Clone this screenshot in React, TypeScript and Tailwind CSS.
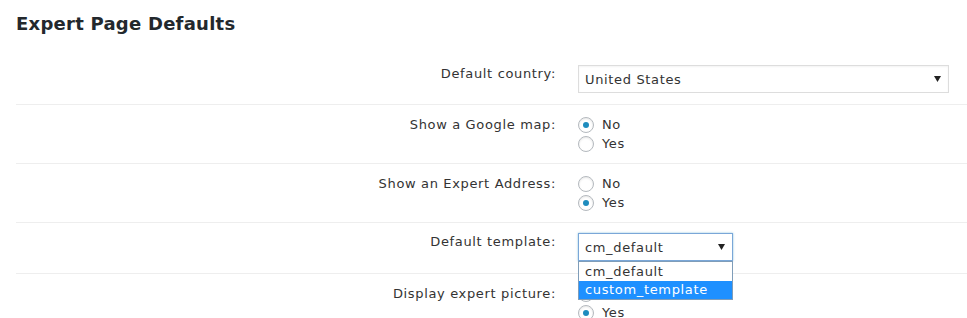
import React from "react";

const Radio = ({ checked }: { checked?: boolean }) => (
  <span className="w-[16px] h-[16px] rounded-full border border-[#b4b9be] bg-white shadow-[inset_0_1px_2px_rgba(0,0,0,0.1)] flex items-center justify-center shrink-0">
    {checked && <span className="w-[6px] h-[6px] rounded-full bg-[#1e8cbe]" />}
  </span>
);

const RadioLine = ({ checked, label }: { checked?: boolean; label: string }) => (
  <div className="flex items-center h-[19px] gap-[8px]">
    <Radio checked={checked} />
    <span>{label}</span>
  </div>
);

const Arrow = () => (
  <svg width="7" height="6" viewBox="0 0 7 6" className="shrink-0">
    <path d="M0 0 H7 L3.5 6 Z" fill="#222" />
  </svg>
);

export default function App() {
  return (
    <div className="font-['DejaVu_Sans',sans-serif] text-[13px] leading-[19px] tracking-[0.65px] text-[#333] bg-white w-[967px] h-[318px] overflow-hidden">
      <h2 className="ml-[16px] mt-[12px] text-[18px] leading-[24px] tracking-[0.25px] font-bold text-[#23282d]">
        Expert Page Defaults
      </h2>
      <div className="ml-[16px] mt-[16px]">
        {/* Row 1 */}
        <div className="flex border-b border-[#eee]">
          <div className="w-[540px] shrink-0 text-right pt-[12px]">Default country:</div>
          <div className="pl-[22px] pt-[13px] pb-[11px]">
            <div className="w-[371px] h-[28px] border border-[#ddd] bg-white flex items-center justify-between pl-[6px] pr-[7px] shadow-[inset_0_1px_2px_rgba(0,0,0,0.05)]">
              <span>United States</span>
              <Arrow />
            </div>
          </div>
        </div>
        {/* Row 2 */}
        <div className="flex border-b border-[#eee]">
          <div className="w-[540px] shrink-0 text-right pt-[10px]">Show a Google map:</div>
          <div className="pl-[22px] pt-[10px] pb-[10px]">
            <RadioLine checked label="No" />
            <RadioLine label="Yes" />
          </div>
        </div>
        {/* Row 3 */}
        <div className="flex border-b border-[#eee]">
          <div className="w-[540px] shrink-0 text-right pt-[10px]">Show an Expert Address:</div>
          <div className="pl-[22px] pt-[10px] pb-[10px]">
            <RadioLine label="No" />
            <RadioLine checked label="Yes" />
          </div>
        </div>
        {/* Row 4 */}
        <div className="flex border-b border-[#eee]">
          <div className="w-[540px] shrink-0 text-right pt-[9px]">Default template:</div>
          <div className="pl-[22px] pt-[10px] pb-[12px]">
            <div className="relative">
              <div className="w-[155px] h-[28px] border border-[#7aa7d8] bg-white flex items-center justify-between pl-[6px] pr-[7px] shadow-[0_0_2px_rgba(30,140,190,0.5)]">
                <span>cm_default</span>
                <Arrow />
              </div>
              <div className="absolute left-0 top-[28px] w-[155px] border border-[#7f9db9] bg-white z-10">
                <div className="h-[19px] pl-[6px] leading-[19px]">cm_default</div>
                <div className="h-[18px] pl-[6px] leading-[18px] bg-[#1e90ff] text-white">custom_template</div>
              </div>
            </div>
          </div>
        </div>
        {/* Row 5 */}
        <div className="flex">
          <div className="w-[540px] shrink-0 text-right pt-[10px]">Display expert picture:</div>
          <div className="pl-[22px] pt-[10px] pb-[10px]">
            <RadioLine label="No" />
            <RadioLine checked label="Yes" />
          </div>
        </div>
      </div>
    </div>
  );
}
